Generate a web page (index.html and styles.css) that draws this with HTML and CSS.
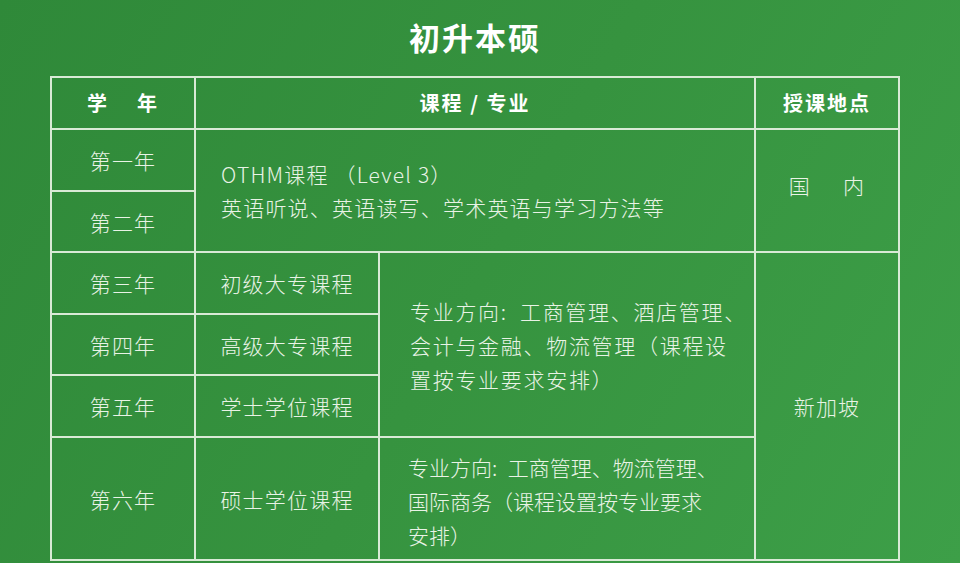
FILE: index.html
```html
<!DOCTYPE html>
<html lang="zh-CN">
<head>
<meta charset="utf-8">
<title>初升本硕</title>
<link rel="stylesheet" href="styles.css">
</head>
<body>
<div class="page">
  <h1 class="title">初升本硕</h1>
  <table class="plan">
    <colgroup>
      <col class="c-year">
      <col class="c-course">
      <col class="c-major">
      <col class="c-place">
    </colgroup>
    <tr class="r-head">
      <th><span class="gap">学</span>年</th>
      <th colspan="2">课程 / 专业</th>
      <th>授课地点</th>
    </tr>
    <tr class="r-62">
      <td>第一年</td>
      <td colspan="2" rowspan="2" class="left othm">OTHM课程 （Level 3）<br>英语听说、英语读写、学术英语与学习方法等</td>
      <td rowspan="2" class="place-cn"><span class="gap2">国</span>内</td>
    </tr>
    <tr class="r-61">
      <td>第二年</td>
    </tr>
    <tr class="r-62">
      <td>第三年</td>
      <td>初级大专课程</td>
      <td rowspan="3" class="left major1">专业方向:&ensp;工商管理、酒店管理、<br>会计与金融、物流管理（课程设<br>置按专业要求安排）</td>
      <td rowspan="4">新加坡</td>
    </tr>
    <tr class="r-61">
      <td>第四年</td>
      <td>高级大专课程</td>
    </tr>
    <tr class="r-62">
      <td>第五年</td>
      <td>学士学位课程</td>
    </tr>
    <tr class="r-123">
      <td>第六年</td>
      <td>硕士学位课程</td>
      <td class="left major2">专业方向:&ensp;工商管理、物流管理、<br>国际商务（课程设置按专业要求<br>安排）</td>
    </tr>
  </table>
</div>
</body>
</html>
```

FILE: styles.css
```css
html, body {
  margin: 0;
  padding: 0;
}
body {
  width: 960px;
  height: 563px;
  overflow: hidden;
  background: linear-gradient(120deg, #2f8939 0%, #36933f 50%, #3d9f48 100%);
  font-family: "Noto Sans CJK SC", "Noto Sans", sans-serif;
  color: #e9f3e6;
}
.page {
  width: 850px;
  margin-left: 50px;
  padding-top: 17px;
}
.title {
  margin: 0 0 19px 0;
  height: 40px;
  line-height: 40px;
  font-size: 31px;
  font-weight: 700;
  letter-spacing: 2px;
  text-align: center;
  color: #ffffff;
}
.plan {
  width: 850px;
  border-collapse: collapse;
  table-layout: fixed;
  border: 2px solid #d9ead6;
}
.c-year { width: 144px; }
.c-course { width: 184px; }
.c-major { width: 376px; }
.c-place { width: 144px; }
.plan th, .plan td {
  border: 2px solid #d9ead6;
  padding: 0;
  text-align: center;
  vertical-align: middle;
  font-size: 21px;
  font-weight: 300;
  letter-spacing: 1.2px;
  line-height: 34px;
}
.plan th {
  font-size: 20px;
  font-weight: 700;
  letter-spacing: 2px;
  color: #ffffff;
}
.gap { margin-right: 28px; }
.gap2 { margin-right: 32px; }
.r-head { height: 52px; }
.r-62 { height: 62px; }
.r-61 { height: 61px; }
.r-123 { height: 123px; }
.plan td.left { text-align: left; }
.plan td.othm { padding-left: 25px; line-height: 33px; }
.plan td.major1 { padding-left: 30px; letter-spacing: 1.7px; padding-top: 1px; }
.plan td.major2 { padding-left: 28px; letter-spacing: 0; padding-top: 4px; }
.plan td.place-cn { padding-bottom: 12px; }
```
